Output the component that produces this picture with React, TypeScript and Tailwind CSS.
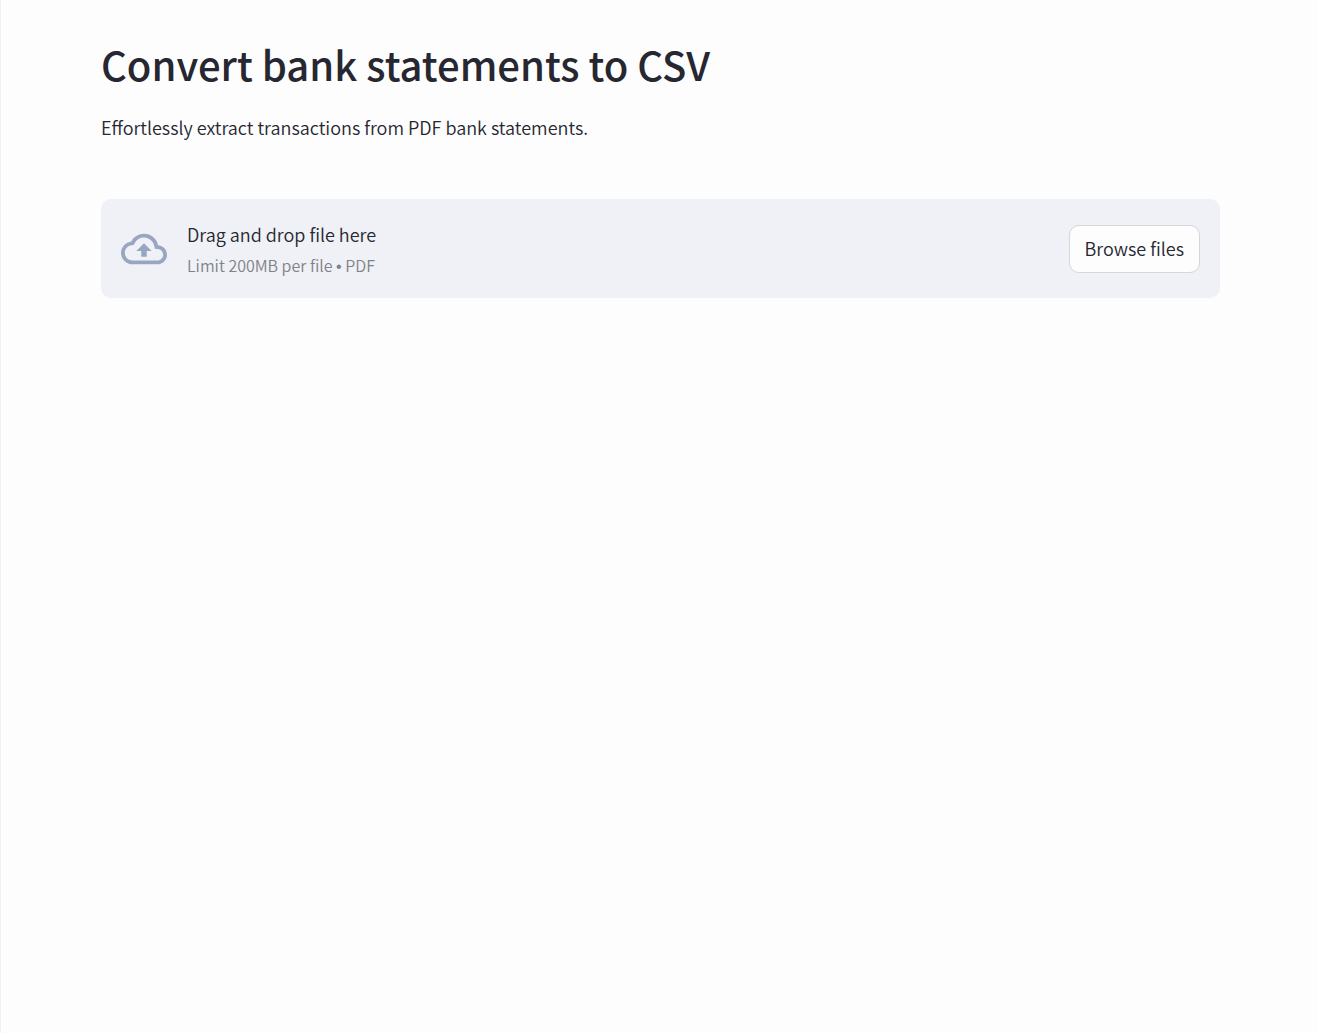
import { useRef } from "react";
import { MdOutlineCloudUpload } from "react-icons/md";

export default function App() {
  const fileInput = useRef<HTMLInputElement>(null);

  return (
    <div className="min-h-screen border-l border-[#f0f1f6] bg-[#fdfdfd] font-['Noto_Sans_CJK_SC','Noto_Sans',sans-serif] font-[350] text-[#262730]">
      <main className="pt-[38px] pr-[98px] pb-10 pl-[100px]">
        <h1 className="text-[40px] leading-[52px] font-medium">Convert bank statements to CSV</h1>
        <p className="mt-[22px] text-[18px] leading-[30px]">Effortlessly extract transactions from PDF bank statements.</p>
        <section className="mt-[57px] flex items-center rounded-[10px] bg-[#f0f1f6] px-5 py-5" aria-label="File upload">
          <MdOutlineCloudUpload className="mr-5 size-[46px] shrink-0 text-[#97a6c3]" aria-hidden="true" />
          <div className="flex min-w-0 flex-1 flex-col gap-1">
            <label htmlFor="statement" className="text-[18px] leading-[30px]">Drag and drop file here</label>
            <small className="text-[16px] leading-[25px] text-[#808189]">
              Limit 200MB per file <span className="font-['Liberation_Sans'] leading-none">•</span> PDF
            </small>
          </div>
          <input ref={fileInput} id="statement" type="file" accept="application/pdf" className="hidden" />
          <button
            type="button"
            onClick={() => fileInput.current?.click()}
            className="h-12 shrink-0 rounded-[10px] border border-[#d5d6da] bg-[#fdfdfd] px-[15px] pb-0.5 text-[18px] leading-[30px]"
          >
            Browse files
          </button>
        </section>
      </main>
    </div>
  );
}
